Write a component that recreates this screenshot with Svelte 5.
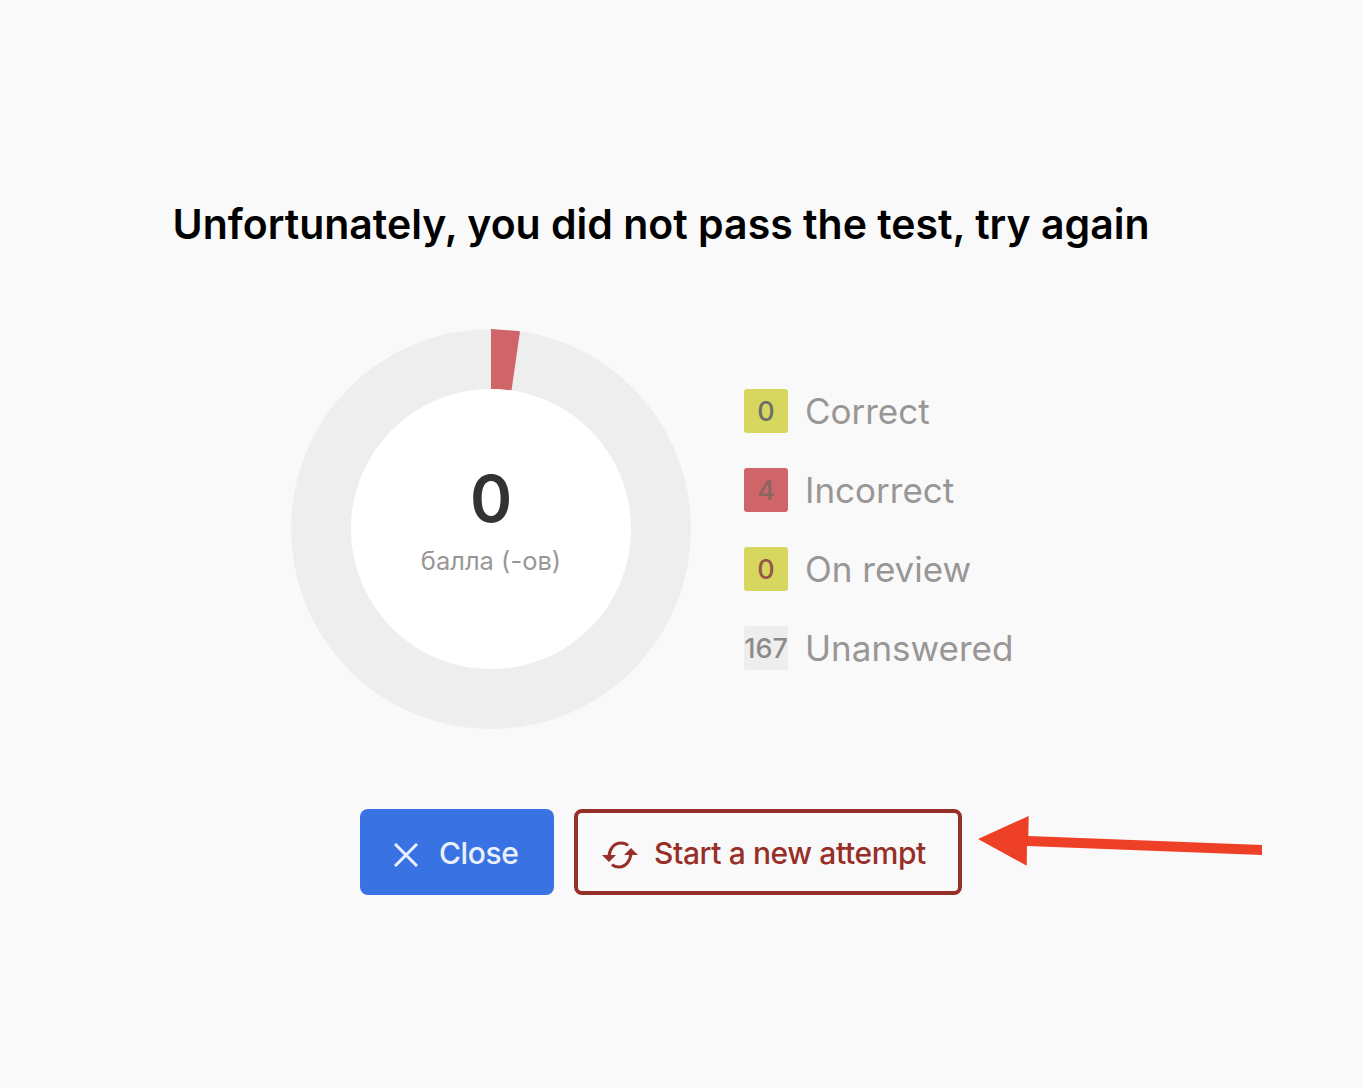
<script>
  const legend = [
    { value: 0, label: 'Correct', bg: '#d7d75f', color: '#6e6e68' },
    { value: 4, label: 'Incorrect', bg: '#cf6568', color: '#8a6660' },
    { value: 0, label: 'On review', bg: '#d7d75f', color: '#96574a' },
    { value: 167, label: 'Unanswered', bg: '#eeeeee', color: '#8f8a8a' }
  ];
</script>

<main class="page">
  <h1>Unfortunately, you did not pass the test, try again</h1>

  <section class="result">
    <div class="donut">
      <svg class="ring" viewBox="0 0 400 400" width="400" height="400" aria-hidden="true">
        <circle cx="200" cy="200" r="170" fill="none" stroke="#eeeeee" stroke-width="60" />
        <path d="M200 0 L229 2.3 L220.500 61.6 L200 60 Z" fill="#cf6568" />
      </svg>
      <div class="score">
        <span class="points">0</span>
        <span class="caption">балла (-ов)</span>
      </div>
    </div>

    <ul>
      {#each legend as item}
        <li>
          <span class="badge" style:background={item.bg} style:color={item.color}>{item.value}</span>
          <span>{item.label}</span>
        </li>
      {/each}
    </ul>
  </section>

  <div class="actions">
    <button class="close">
      <svg viewBox="0 0 24 24" width="24" height="24" aria-hidden="true">
        <path d="M1 1 L23 23 M23 1 L1 23" fill="none" stroke="#eaf1fd" stroke-width="3" />
      </svg>
      <span>Close</span>
    </button>
    <button class="retry">
      <svg viewBox="0 0 36 28" width="36" height="28" aria-hidden="true">
        <path d="M7 15 C7.500 7.500 12.500 2 19 2 C22 2 24.500 3 26 4.500" fill="none" stroke="#962f28" stroke-width="3" />
        <path d="M29 12 C28.500 20 23.500 26 17 26 C14 26 11.500 25 10 23.500" fill="none" stroke="#962f28" stroke-width="3" />
        <path d="M0 14 L14 14 L7 21 Z M22 14 L36 14 L29 7 Z" fill="#962f28" />
      </svg>
      <span>Start a new attempt</span>
    </button>
  </div>

  <svg class="arrow" viewBox="0 0 284 50" width="284" height="50" aria-hidden="true">
    <path d="M0 23 L50.7 0 L50.300 20 L284 29 L284 39 L49 30 L48.700 49.700 Z" fill="#ee4026" />
  </svg>
</main>

<style>
  :global(body) {
    margin: 0;
    background: #f9f9f9;
    font-family: Inter, "Noto Sans", sans-serif;
  }

  .page {
    position: relative;
    box-sizing: border-box;
    height: 1088px;
    padding: 198px 41px 0 0;
    display: flex;
    flex-direction: column;
    align-items: center;
  }

  h1 {
    margin: 0;
    font-size: 41px;
    line-height: 52px;
    font-weight: 600;
    color: #000;
    white-space: nowrap;
  }

  .result {
    margin-top: 79px;
    width: 740px;
    display: flex;
    align-items: center;
    gap: 53px;
  }

  .donut {
    position: relative;
    width: 400px;
    height: 400px;
    flex: none;
  }

  .ring {
    display: block;
  }

  .score {
    position: absolute;
    inset: 60px;
    border-radius: 50%;
    background: #fff;
    display: flex;
    flex-direction: column;
    align-items: center;
  }

  .points {
    margin-top: 73px;
    font-size: 64px;
    line-height: 74px;
    font-weight: 600;
    color: #333;
  }

  .caption {
    margin-top: 10px;
    font-size: 25.500px;
    line-height: 30px;
    color: #999696;
  }

  ul {
    list-style: none;
    margin: 0;
    padding: 0;
    display: grid;
    gap: 35px;
  }

  li {
    display: flex;
    align-items: center;
    gap: 17px;
    height: 44px;
    font-size: 35px;
    color: #999696;
    white-space: nowrap;
  }

  .badge {
    width: 44px;
    height: 44px;
    padding-top: 2px;
    box-sizing: border-box;
    border-radius: 3px;
    display: flex;
    align-items: center;
    justify-content: center;
    font-size: 27px;
    font-weight: 500;
  }

  .actions {
    margin-top: 80px;
    display: flex;
    gap: 20px;
  }

  button {
    box-sizing: border-box;
    height: 86px;
    border-radius: 8px;
    display: flex;
    align-items: center;
    font-family: inherit;
    font-size: 30px;
    font-weight: 500;
    letter-spacing: -0.4px;
  }

  button svg {
    flex: none;
    margin-top: 5px;
  }

  button span {
    margin-top: 1px;
  }

  .close {
    width: 194px;
    padding: 0 0 0 34px;
    gap: 21px;
    border: none;
    background: #3973e3;
    color: #eaf1fd;
  }

  .retry {
    width: 388px;
    padding: 0 0 0 24px;
    gap: 16px;
    border: 4px solid #962f28;
    background: #f9f9f9;
    color: #962f28;
  }

  .arrow {
    position: absolute;
    left: 978px;
    top: 816px;
  }
</style>
